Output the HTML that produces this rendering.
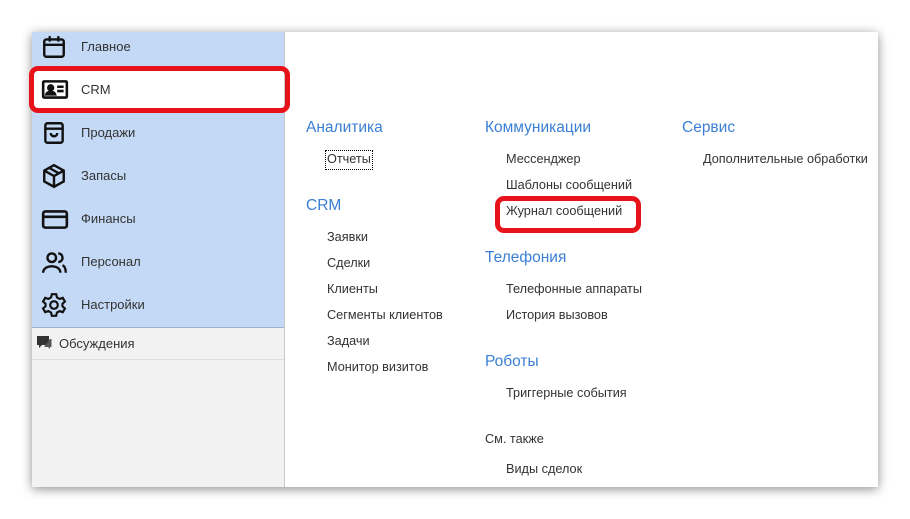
<!DOCTYPE html>
<html><head><meta charset="utf-8"><style>
body{margin:0;width:910px;height:519px;background:#fff;font-family:"Liberation Sans",sans-serif;position:relative;overflow:hidden}
.panel{position:absolute;left:32px;top:32px;width:846px;height:455px;background:#fff;box-shadow:0 2px 10px rgba(0,0,0,.45)}
.side{position:absolute;left:0;top:0;width:252px;height:455px;background:#f2f2f2;border-right:1px solid #c8c8c8}
.blue{position:absolute;left:0;top:0;width:252px;height:295px;background:#c3d9f5;border-bottom:1px solid #9eb0c8}
.item{position:absolute;left:0;width:252px;height:40px;font-size:13px;color:#333}
.item span{position:absolute;left:49px;top:12px}
.item svg{position:absolute;left:9px;top:7px}
.disc{position:absolute;left:0;top:296px;width:252px;height:31px;border-bottom:1px solid #ddd;font-size:13px;color:#333}
.abs{position:absolute;white-space:nowrap}
.h{font-size:15.5px;color:#3a7fd5}
.l{font-size:12.7px;color:#333}
.red{position:absolute;border:5px solid #e8131a;border-radius:9px}
</style></head><body>
<div class="panel">
<div class="side">
<div class="blue"></div>
<div class="item" style="top:-5px"><svg width="26" height="26" viewBox="0 0 24 24" fill="none" stroke="#111" stroke-width="2.2"><rect x="3" y="5" width="18" height="16" rx="2"/><path d="M3 10h18M8 2v5M16 2v5"/></svg><span>Главное</span></div>
<div class="item" style="top:38px;background:#fff"><svg width="28" height="26" viewBox="0 0 26 24" fill="none" stroke="#111" stroke-width="2.4"><rect x="2" y="4" width="22" height="15" rx="1"/><circle cx="9" cy="10" r="2.2" fill="#111"/><path d="M5 16c1-3 7-3 8 0z" fill="#111"/><path d="M15 9h6M15 13h6"/></svg><span>CRM</span></div>
<div class="item" style="top:81px"><svg width="26" height="26" viewBox="0 0 24 24" fill="none" stroke="#111" stroke-width="2.2"><rect x="4" y="3" width="16" height="18" rx="2"/><path d="M4 8h16M9 12c0 4 6 4 6 0"/></svg><span>Продажи</span></div>
<div class="item" style="top:124px"><svg width="26" height="26" viewBox="0 0 24 24" fill="none" stroke="#111" stroke-width="2.2"><path d="M12 2l9 5v10l-9 5-9-5V7z M3 7l9 5 9-5M12 12v10M7.5 4.5l9 5"/></svg><span>Запасы</span></div>
<div class="item" style="top:167px"><svg width="28" height="26" viewBox="0 0 26 24" fill="none" stroke="#111" stroke-width="2.4"><rect x="2" y="5" width="22" height="15" rx="2"/><path d="M2 10h22"/></svg><span>Финансы</span></div>
<div class="item" style="top:210px"><svg width="28" height="26" viewBox="0 0 26 24" fill="none" stroke="#111" stroke-width="2.2"><circle cx="10" cy="8" r="4"/><path d="M2 22c0-8 16-8 16 0M16 4a4 4 0 0 1 0 8M20 15c2 1 3 4 3 7"/></svg><span>Персонал</span></div>
<div class="item" style="top:253px"><svg width="26" height="26" viewBox="0 0 24 24" fill="none" stroke="#111" stroke-width="2"><circle cx="12" cy="12" r="3.5"/><path d="M10 2h4l.7 3 2.5 1.4 2.9-1 2 3.4-2.3 2v2.4l2.3 2-2 3.4-2.9-1L14.7 19 14 22h-4l-.7-3-2.5-1.4-2.9 1-2-3.4 2.3-2v-2.4l-2.3-2 2-3.4 2.9 1L9.3 5z"/></svg><span>Настройки</span></div>
<div class="disc"><svg style="position:absolute;left:4px;top:7px" width="16" height="16" viewBox="0 0 16 16"><path d="M1 1h12v9H6l-3 3v-3H1z" fill="#333"/><path d="M14 4h1.5v8H14v2l-2-2H8" fill="#555"/></svg><span style="position:absolute;left:27px;top:8px">Обсуждения</span></div>
</div>
</div>
<div class="red" style="left:29px;top:66px;width:251px;height:37px"></div>
<div class="abs h" style="left:306px;top:119px">Аналитика</div>
<div class="abs l" style="left:326px;top:151px;outline:1px dotted #000;outline-offset:0;padding:0 1px 1px 1px;line-height:17px">Отчеты</div>
<div class="abs h" style="left:306px;top:197px">CRM</div>
<div class="abs l" style="left:327px;top:230px">Заявки</div>
<div class="abs l" style="left:327px;top:256px">Сделки</div>
<div class="abs l" style="left:327px;top:282px">Клиенты</div>
<div class="abs l" style="left:327px;top:308px">Сегменты клиентов</div>
<div class="abs l" style="left:327px;top:334px">Задачи</div>
<div class="abs l" style="left:327px;top:360px">Монитор визитов</div>
<div class="abs h" style="left:485px;top:119px">Коммуникации</div>
<div class="abs l" style="left:506px;top:152px">Мессенджер</div>
<div class="abs l" style="left:506px;top:178px">Шаблоны сообщений</div>
<div class="abs l" style="left:506px;top:204px">Журнал сообщений</div>
<div class="red" style="left:495px;top:196px;width:136px;height:27px"></div>
<div class="abs h" style="left:485px;top:249px">Телефония</div>
<div class="abs l" style="left:506px;top:282px">Телефонные аппараты</div>
<div class="abs l" style="left:506px;top:308px">История вызовов</div>
<div class="abs h" style="left:485px;top:353px">Роботы</div>
<div class="abs l" style="left:506px;top:386px">Триггерные события</div>
<div class="abs l" style="left:485px;top:432px">См. также</div>
<div class="abs l" style="left:506px;top:462px">Виды сделок</div>
<div class="abs h" style="left:682px;top:119px">Сервис</div>
<div class="abs l" style="left:703px;top:152px">Дополнительные обработки</div>
</body></html>
